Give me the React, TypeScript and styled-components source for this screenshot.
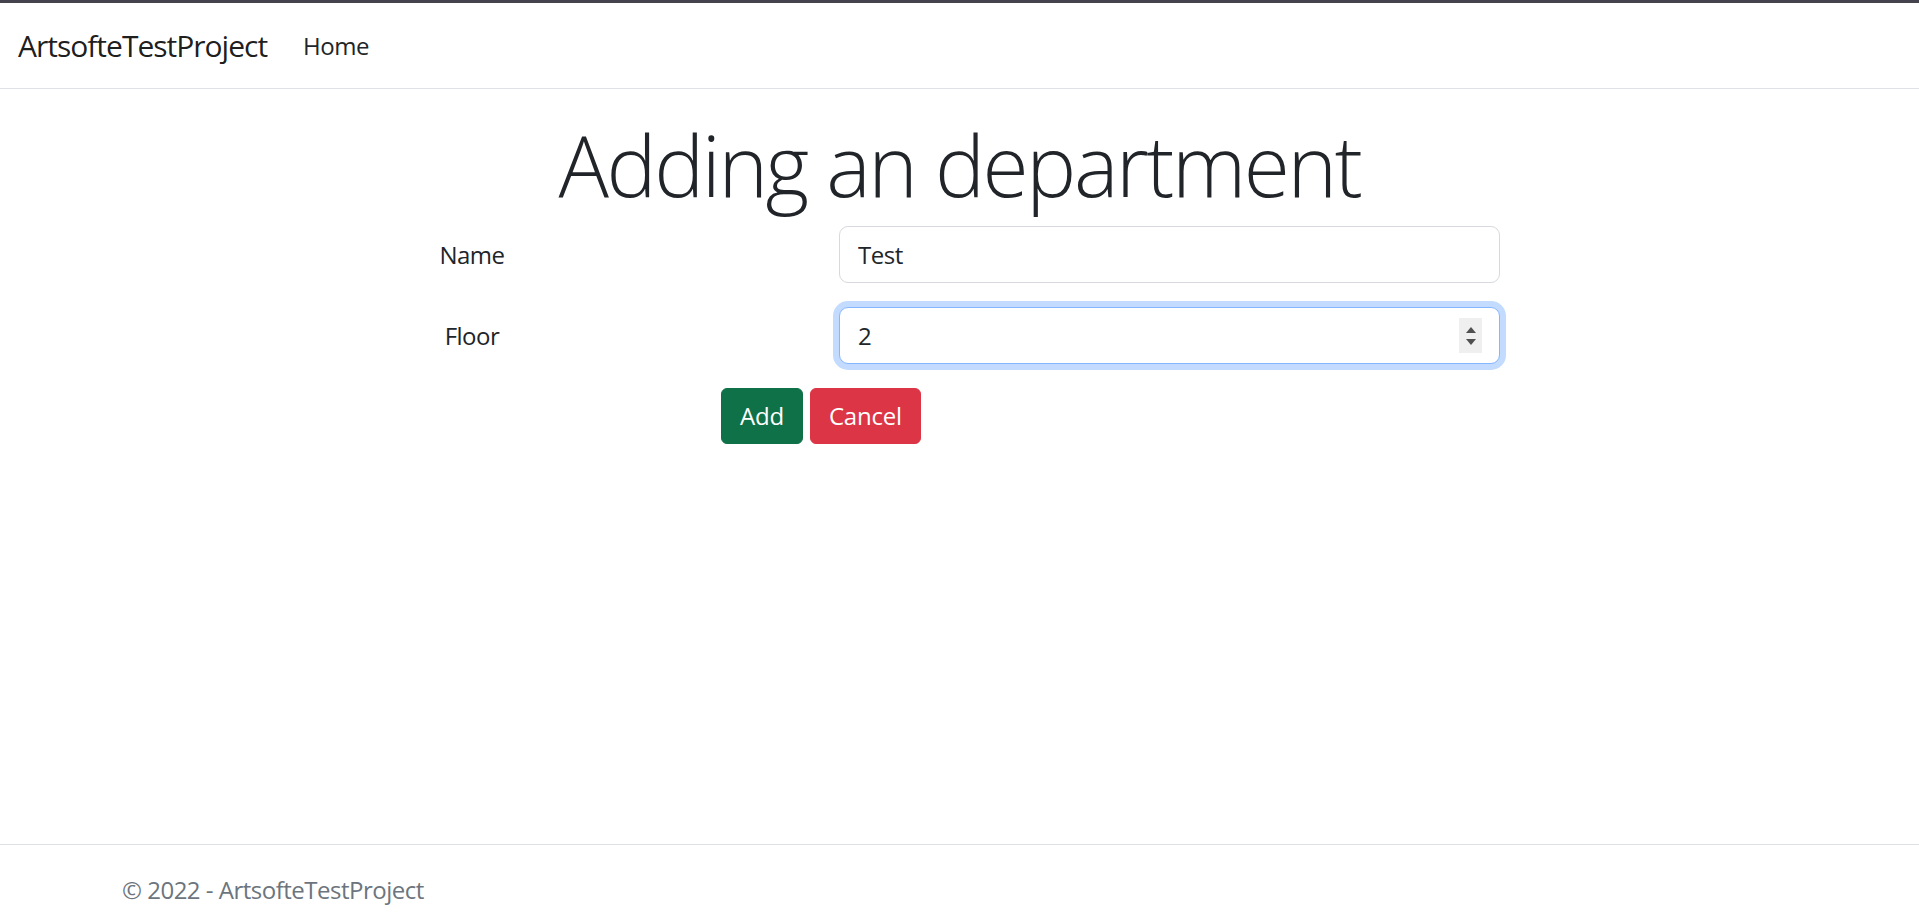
import React from "react";
import styled, { createGlobalStyle } from "styled-components";

const GlobalStyle = createGlobalStyle`
  html, body { margin: 0; padding: 0; }
  body {
    font-family: "Segoe UI", "Open Sans", "Noto Sans", Arial, sans-serif;
    font-size: 24px;
    line-height: 1.5;
    letter-spacing: -0.5px;
    color: #212529;
    background: #ffffff;
  }
  *, *::before, *::after { box-sizing: border-box; }
`;

const Page = styled.div`
  display: flex;
  flex-direction: column;
  height: 100vh;
  overflow: hidden;
`;

const TopStrip = styled.div`
  height: 3px;
  flex: 0 0 3px;
  background: #45444e;
`;

const Navbar = styled.nav`
  display: flex;
  align-items: center;
  padding: 13px 18px 12px;
  border-bottom: 1px solid #dee2e6;
  background: #fff;
`;

const Brand = styled.a`
  font-size: 30px;
  line-height: 60px;
  letter-spacing: -1px;
  color: rgba(0, 0, 0, 0.9);
  text-decoration: none;
  margin-right: 24px;
`;

const NavLink = styled.a`
  font-size: 24px;
  line-height: 36px;
  padding: 12px;
  color: #212529;
  text-decoration: none;
`;

const Main = styled.main`
  flex: 1 1 auto;
  width: 100%;
  max-width: 1711px;
  margin: 0 auto;
  padding: 0 18px;
`;

const Title = styled.h1`
  margin: 26px 0 11px;
  text-align: center;
  font-size: 84px;
  font-weight: 300;
  line-height: 100px;
  letter-spacing: -2.4px;
  color: #212529;
`;

const Form = styled.form`
  display: flex;
  flex-direction: column;
  gap: 24px;
`;

const FieldRow = styled.div`
  display: grid;
  grid-template-columns: 700px 661px;
  column-gap: 17px;
  align-items: center;
`;

const Label = styled.label`
  text-align: center;
  font-size: 24px;
  line-height: 36px;
`;

const InputWrap = styled.div`
  position: relative;
`;

const TextInput = styled.input<{ $focused?: boolean }>`
  display: block;
  width: 100%;
  height: 57px;
  padding: 9px 18px;
  font-family: inherit;
  font-size: 24px;
  line-height: 36px;
  letter-spacing: -0.5px;
  color: #212529;
  background: #fff;
  border: 1px solid ${(p) => (p.$focused ? "#86b7fe" : "#d6d9dd")};
  border-radius: 9px;
  outline: none;
  box-shadow: ${(p) => (p.$focused ? "0 0 0 6px rgba(13, 110, 253, 0.25)" : "none")};
  -moz-appearance: textfield;
  &::-webkit-outer-spin-button,
  &::-webkit-inner-spin-button {
    -webkit-appearance: none;
    margin: 0;
  }
`;

const Spinner = styled.div`
  position: absolute;
  right: 18px;
  top: 11px;
  width: 23px;
  height: 35px;
  background: #efefef;
  display: flex;
  flex-direction: column;
  align-items: center;
  justify-content: center;
  gap: 6px;
`;

const Arrow = styled.span<{ $down?: boolean }>`
  width: 0;
  height: 0;
  border-left: 5px solid transparent;
  border-right: 5px solid transparent;
  ${(p) =>
    p.$down
      ? "border-top: 6px solid #505050;"
      : "border-bottom: 6px solid #505050;"}
`;

const Actions = styled.div`
  display: flex;
  gap: 7px;
  margin-left: 599px;
`;

const Button = styled.button<{ $variant: "success" | "danger" }>`
  font-family: inherit;
  font-size: 24px;
  line-height: 36px;
  letter-spacing: -0.2px;
  padding: 9px 18px;
  border: 1px solid ${(p) => (p.$variant === "success" ? "#0f7148" : "#dc3545")};
  border-radius: 6px;
  color: #fff;
  background: ${(p) => (p.$variant === "success" ? "#0f7148" : "#dc3545")};
  cursor: pointer;
`;

const Footer = styled.footer`
  flex: 0 0 77px;
  height: 77px;
  overflow: hidden;
  border-top: 1px solid #dee2e6;
`;

const FooterInner = styled.div`
  max-width: 1711px;
  margin: 0 auto;
  padding: 0 18px;
  line-height: 90px;
  font-size: 24px;
  color: #6c757d;
`;

export default function App() {
  return (
    <>
      <GlobalStyle />
      <Page>
        <TopStrip />
        <Navbar>
          <Brand href="#">ArtsofteTestProject</Brand>
          <NavLink href="#">Home</NavLink>
        </Navbar>
        <Main>
          <Title>Adding an department</Title>
          <Form onSubmit={(e) => e.preventDefault()}>
            <FieldRow>
              <Label htmlFor="name">Name</Label>
              <InputWrap>
                <TextInput id="name" type="text" defaultValue="Test" />
              </InputWrap>
            </FieldRow>
            <FieldRow>
              <Label htmlFor="floor">Floor</Label>
              <InputWrap>
                <TextInput id="floor" type="number" defaultValue="2" $focused />
                <Spinner>
                  <Arrow />
                  <Arrow $down />
                </Spinner>
              </InputWrap>
            </FieldRow>
            <Actions>
              <Button type="submit" $variant="success">Add</Button>
              <Button type="button" $variant="danger">Cancel</Button>
            </Actions>
          </Form>
        </Main>
        <Footer>
          <FooterInner>© 2022 - ArtsofteTestProject</FooterInner>
        </Footer>
      </Page>
    </>
  );
}
